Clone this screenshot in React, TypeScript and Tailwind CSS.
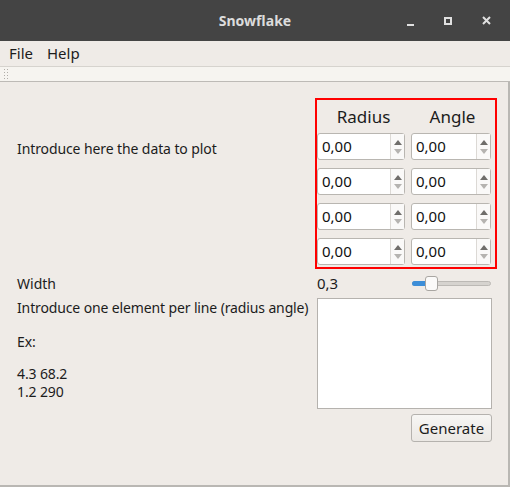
import React from "react";

const font = { fontFamily: '"Noto Sans", "Open Sans", sans-serif' };

// Qt-style double spin box with up/down arrows
const SpinBox = ({ width }: { width: string }) => (
  <div
    className={`flex h-[27px] ${width} rounded-[3px] border border-[#b9b6b1] bg-white`}
  >
    <div className="flex flex-1 items-center pl-[4px] text-[15px] text-[#111]">0,00</div>
    <div className="flex w-[14px] flex-col items-center justify-center gap-[4px] border-l border-[#dcd9d5] bg-[#faf9f8]">
      <svg width="8" height="5" viewBox="0 0 8 5">
        <path d="M0 5 L4 0 L8 5 Z" fill="#6f6d6a" />
      </svg>
      <svg width="8" height="5" viewBox="0 0 8 5">
        <path d="M0 0 L8 0 L4 5 Z" fill="#b5b3b0" />
      </svg>
    </div>
  </div>
);

export default function App() {
  return (
    <div
      className="relative flex h-[487px] w-[510px] flex-col overflow-hidden bg-[#efebe7] text-[14px] text-[#1c1c1c]"
      style={font}
    >
      {/* Title bar */}
      <div className="grid h-[41px] shrink-0 grid-cols-[1fr_auto_1fr] items-center bg-[#444444]">
        <div />
        <div className="text-[14px] font-bold text-[#dcdcdc]">Snowflake</div>
        <div className="flex items-center justify-end gap-[30px] pr-[19px]">
          <div className="mt-[8px] h-[2px] w-[7px] bg-[#e0e0e0]" />
          <div className="h-[8px] w-[8px] border-2 border-[#e0e0e0]" />
          <svg width="9" height="9" viewBox="0 0 9 9">
            <path d="M1 1 L8 8 M8 1 L1 8" stroke="#e0e0e0" strokeWidth="2" />
          </svg>
        </div>
      </div>

      {/* Menu bar */}
      <div className="flex h-[25px] shrink-0 items-center gap-[14px] pl-[9px] text-[15px]">
        <span>File</span>
        <span>Help</span>
      </div>

      {/* Tool bar */}
      <div className="flex h-[16px] shrink-0 items-center border-y border-t-[#d6d3ce] border-b-[#bdbab6] bg-[#f6f4f0] pl-[4px]">
        <div className="grid grid-cols-2 gap-x-[2px] gap-y-[2px]">
          {Array.from({ length: 8 }).map((_, i) => (
            <div key={i} className="h-[1px] w-[1px] bg-[#b0ada8]" />
          ))}
        </div>
      </div>

      {/* Central widget */}
      <div className="flex flex-1 flex-col border-r-2 border-b-2 border-[#b9b7b3]">
        <div className="mt-[16px] flex">
          <div className="w-[315px] whitespace-nowrap pl-[17px] pt-[40px] tracking-[-0.1px]">
            Introduce here the data to plot
          </div>
          <div className="flex w-[182px] flex-col border-2 border-[#ff0000] pb-[2px]">
            <div className="flex h-[33px] items-center text-[17px]">
              <div className="w-[93px] text-center">Radius</div>
              <div className="w-[85px] text-center">Angle</div>
            </div>
            <div className="flex flex-col gap-[8px]">
              {Array.from({ length: 4 }).map((_, i) => (
                <div key={i} className="flex gap-[6px]">
                  <SpinBox width="w-[88px]" />
                  <SpinBox width="w-[80px]" />
                </div>
              ))}
            </div>
          </div>
        </div>

        {/* Width row */}
        <div className="mt-[4px] flex h-[20px] items-center">
          <div className="w-[317px] pl-[17px]">Width</div>
          <div className="w-[95px] text-[15px]">0,3</div>
          <div className="relative flex h-[16px] w-[79px] items-center">
            <div className="h-[5px] w-full rounded-full border border-[#bcb9b5] bg-[#d6d3cf]" />
            <div className="absolute left-0 h-[5px] w-[16px] rounded-l-full bg-[#3d8ed8]" />
            <div className="absolute left-[13px] h-[15px] w-[13px] rounded-[3px] border border-[#a9a6a2] bg-[#fbfaf9]" />
          </div>
        </div>

        <div className="mt-[5px] flex">
          <div className="flex w-[317px] flex-col whitespace-nowrap pl-[17px] pt-[1px] tracking-[-0.13px]">
            <div className="leading-[18px]">Introduce one element per line (radius angle)</div>
            <div className="mt-[16px] leading-[18px]">Ex:</div>
            <div className="mt-[14px] leading-[18px]">4.3 68.2</div>
            <div className="leading-[18px]">1.2 290</div>
          </div>
          <div className="flex flex-col items-end">
            <div className="h-[111px] w-[175px] border border-[#b5b2ae] bg-white" />
            <button className="mt-[5px] h-[28px] w-[81px] rounded-[3px] border border-[#b5b2ae] bg-gradient-to-b from-[#f7f6f4] to-[#ebe8e4] text-[15px]">
              Generate
            </button>
          </div>
        </div>
      </div>
    </div>
  );
}
